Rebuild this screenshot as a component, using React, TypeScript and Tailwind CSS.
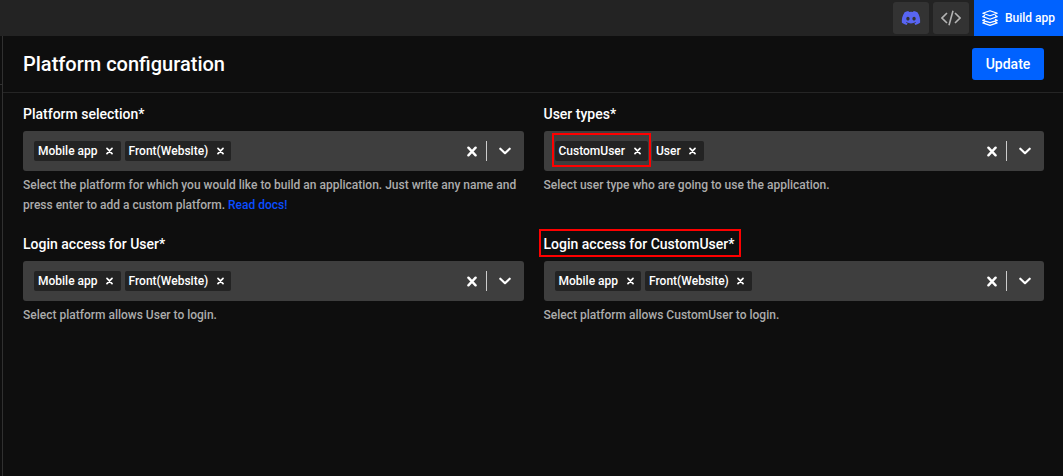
import React, { useState } from "react";
import { FaDiscord } from "react-icons/fa";

type FieldProps = {
  id: string;
  label: string;
  initial: string[];
  help: React.ReactNode;
  markLabel?: boolean;
  markedChip?: string;
};

function Cross({ className }: { className: string }) {
  return (
    <svg viewBox="0 0 10 10" className={className} fill="none" stroke="currentColor" strokeWidth="2.4" strokeLinecap="round" aria-hidden="true">
      <path d="M1.4 1.2 8.6 8.8M8.6 1.2 1.4 8.8" />
    </svg>
  );
}

function Field({ id, label, initial, help, markLabel, markedChip }: FieldProps) {
  const [items, setItems] = useState(initial);
  return (
    <div className="min-w-0">
      <div className="mb-[7px] flex">
        <label htmlFor={id} className="relative text-sm leading-5 font-medium text-white">
          {label}
          {markLabel && <span className="pointer-events-none absolute -top-[5px] -right-[7px] -bottom-[3px] -left-[5px] border-2 border-[#fe0000]" />}
        </label>
      </div>
      <div className="flex h-10 items-center rounded-[3px] bg-[#3e3e3e] pr-[9px] pl-[11px] text-white">
        <div className="flex min-w-0 flex-1 items-center gap-1">
          {items.map((item) => (
            <span key={item} className="relative flex h-5 shrink-0 items-center rounded-xs bg-[#232323] pl-1 text-xs font-medium">
              {item}
              <button type="button" aria-label={"Remove " + item} className="ml-px flex h-5 w-[22px] items-center justify-center" onClick={() => setItems(items.filter((i) => i !== item))}>
                <Cross className="h-2 w-[7px]" />
              </button>
              {markedChip === item && <span className="pointer-events-none absolute -inset-x-[3px] -top-2 -bottom-[6px] z-10 border-2 border-[#fe0000]" />}
            </span>
          ))}
          <input id={id} type="text" autoComplete="off" className="h-5 w-full min-w-0 flex-1 bg-transparent text-xs outline-none" />
        </div>
        <button type="button" aria-label="Clear all" className="flex size-5 items-center justify-center" onClick={() => setItems([])}>
          <Cross className="h-[11px] w-[10px]" />
        </button>
        <span className="mx-1 h-5 w-px bg-[#cccccc]" />
        <button type="button" aria-label="Show options" className="ml-1 flex size-5 items-center justify-center">
          <svg viewBox="0 0 12 8" className="h-2 w-3" fill="none" stroke="currentColor" strokeWidth="2.2" strokeLinecap="round" strokeLinejoin="round" aria-hidden="true">
            <path d="M1.3 1.7 6 6.2 10.7 1.7" />
          </svg>
        </button>
      </div>
      <p className="mt-1 text-xs leading-5 font-medium text-[#acacac]">{help}</p>
    </div>
  );
}

export default function App() {
  return (
    <div className="flex min-h-screen flex-col bg-[#0e0e0e] font-['Roboto','Liberation_Sans',sans-serif]">
      <header className="flex h-9 items-center justify-end bg-[#232323]">
        <div className="mr-[5px] flex gap-1">
          <button type="button" aria-label="Discord" className="flex h-8 w-9 items-center justify-center rounded-[3px] bg-[#333333] text-[#5865f2]">
            <FaDiscord className="size-5" />
          </button>
          <button type="button" aria-label="Code" className="flex h-8 w-9 items-center justify-center rounded-[3px] bg-[#333333] text-[#b4b4b4]">
            <svg viewBox="0 0 20 16" className="h-4 w-5" fill="none" stroke="currentColor" strokeWidth="1.6" aria-hidden="true">
              <path d="M6 3 1 8l5 5M14 3l5 5-5 5M12 .8 8 15.2" />
            </svg>
          </button>
        </div>
        <button type="button" className="flex h-9 items-center gap-[7px] bg-[#0062ff] px-2 text-xs font-medium text-white">
          <svg viewBox="0 0 16 16" className="size-4" fill="none" stroke="currentColor" strokeWidth="1.2" strokeLinejoin="round" aria-hidden="true">
            <path d="M8 .7 15.2 3.2 8 5.7.8 3.2zM3 5.4.8 6.6 8 9.2l7.2-2.6-2.2-1.2M3 9.4.8 10.4l2.2 1M13 9.4l2.2 1-2.2 1M.8 10.4 8 12.6l7.2-2.2M3 11.4l-2.2 1.5L8 15.4l7.2-2.5-2.2-1.5" />
          </svg>
          Build app
        </button>
      </header>
      <div className="flex flex-1">
        <aside className="w-[3px] border-r border-[#303030]">
          <div className="h-12" />
          <div className="h-px bg-[#303030]" />
        </aside>
        <main className="min-w-0 flex-1">
          <div className="flex h-[57px] items-center justify-between border-b border-[#252525] pr-[19px] pl-5">
            <h1 className="text-xl leading-7 font-medium text-white">Platform configuration</h1>
            <button type="button" className="h-8 min-w-[72px] rounded-[3px] bg-[#0062ff] px-3 text-sm font-medium text-white">Update</button>
          </div>
          <div className="grid grid-cols-2 gap-x-5 gap-y-[19px] pt-[11px] pr-[19px] pl-5">
            <Field
              id="platforms"
              label="Platform selection*"
              initial={["Mobile app", "Front(Website)"]}
              help={
                <>
                  Select the platform for which you would like to build an application. Just write any name and press enter to add a custom platform.{" "}
                  <a href="#docs" className="text-[#0a4dff]">Read docs!</a>
                </>
              }
            />
            <Field id="user-types" label="User types*" initial={["CustomUser", "User"]} markedChip="CustomUser" help="Select user type who are going to use the application." />
            <Field id="login-user" label="Login access for User*" initial={["Mobile app", "Front(Website)"]} help="Select platform allows User to login." />
            <Field id="login-custom-user" label="Login access for CustomUser*" initial={["Mobile app", "Front(Website)"]} markLabel help="Select platform allows CustomUser to login." />
          </div>
        </main>
      </div>
    </div>
  );
}
